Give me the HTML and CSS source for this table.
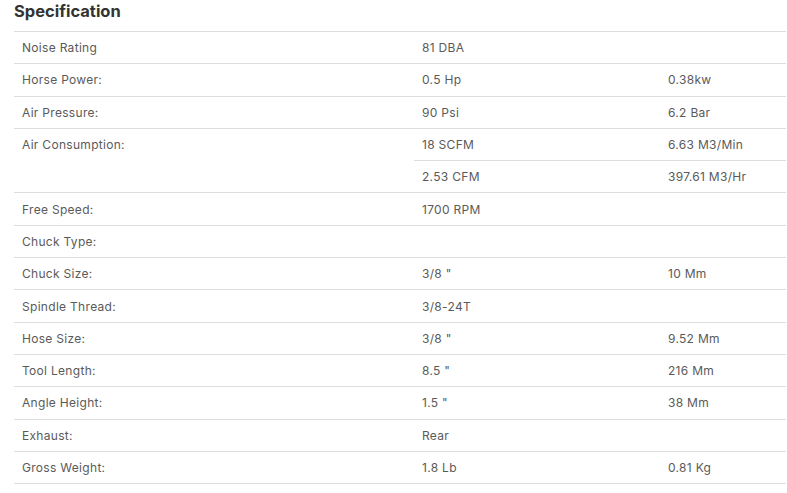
FILE: index.html
```html
<!DOCTYPE html>
<html>
<head>
<meta charset="utf-8">
<link rel="stylesheet" href="styles.css">
</head>
<body>
<section class="spec">
  <h2 class="spec-title">Specification</h2>
  <table class="spec-table">
    <colgroup><col class="c1"><col class="c2"><col class="c3"></colgroup>
    <tbody>
      <tr><td>Noise Rating</td><td>81 DBA</td><td></td></tr>
      <tr><td>Horse Power:</td><td>0.5 Hp</td><td>0.38kw</td></tr>
      <tr><td>Air Pressure:</td><td>90 Psi</td><td>6.2 Bar</td></tr>
      <tr><td rowspan="2">Air Consumption:</td><td>18 SCFM</td><td>6.63 M3/Min</td></tr>
      <tr><td>2.53 CFM</td><td>397.61 M3/Hr</td></tr>
      <tr><td>Free Speed:</td><td>1700 RPM</td><td></td></tr>
      <tr><td>Chuck Type:</td><td></td><td></td></tr>
      <tr><td>Chuck Size:</td><td>3/8 "</td><td>10 Mm</td></tr>
      <tr><td>Spindle Thread:</td><td>3/8-24T</td><td></td></tr>
      <tr><td>Hose Size:</td><td>3/8 "</td><td>9.52 Mm</td></tr>
      <tr><td>Tool Length:</td><td>8.5 "</td><td>216 Mm</td></tr>
      <tr><td>Angle Height:</td><td>1.5 "</td><td>38 Mm</td></tr>
      <tr><td>Exhaust:</td><td>Rear</td><td></td></tr>
      <tr><td>Gross Weight:</td><td>1.8 Lb</td><td>0.81 Kg</td></tr>
    </tbody>
  </table>
</section>
</body>
</html>
```
FILE: styles.css
```css
html, body {
  margin: 0;
  padding: 0;
  background: #fff;
}
body {
  font-family: "Inter", "Noto Sans", sans-serif;
  color: #555;
}
.spec {
  padding: 0 1px 0 14px;
}
.spec-title {
  margin: 0;
  height: 31px;
  font-size: 16.5px;
  font-weight: 700;
  line-height: 23px;
  color: #333;
}
.spec-table {
  width: 772px;
  border-collapse: collapse;
  table-layout: fixed;
}
.c1 { width: 400px; }
.c2 { width: 246px; }
.c3 { width: 126px; }
.spec-table td {
  border-top: 1px solid #ddd;
  border-bottom: 1px solid #ddd;
  padding: 0 8px;
  height: 32.3px;
  font-size: 12px;
  font-weight: 400;
  letter-spacing: 0.3px;
  color: #5a5a5a;
  vertical-align: middle;
  box-sizing: border-box;
}
.spec-table td[rowspan] {
  vertical-align: top;
  padding-top: 8px;
}
```
